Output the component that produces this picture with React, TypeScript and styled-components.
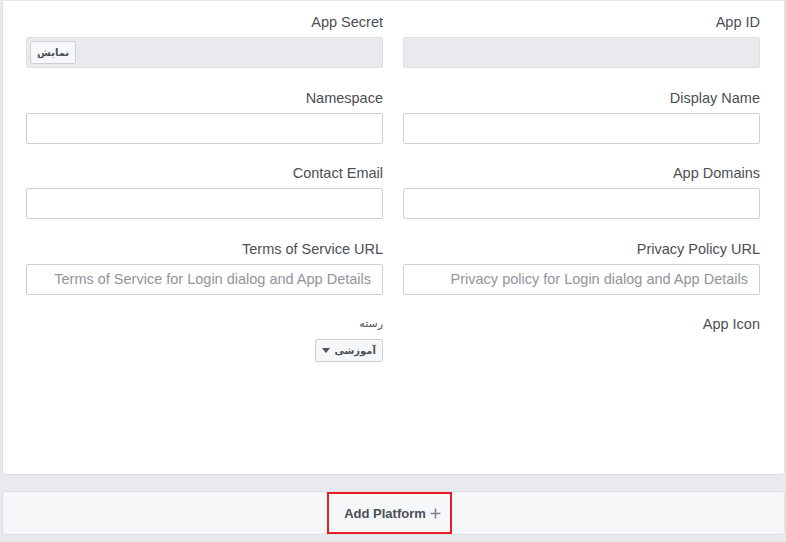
import React from 'react';
import styled, { createGlobalStyle } from 'styled-components';

const GlobalStyle = createGlobalStyle`
  html, body {
    margin: 0;
    padding: 0;
    background: #e9eaed;
  }
  body {
    font-family: "Liberation Sans", Arial, "Noto Sans", sans-serif;
    color: #4b4f56;
  }
`;

const Page = styled.div`
  width: 786px;
  height: 542px;
  overflow: hidden;
  padding: 0 1px 0 2px;
  box-sizing: border-box;
  display: flex;
  flex-direction: column;
  gap: 16px;
`;

const Card = styled.div`
  background: #fff;
  border: 1px solid #dddfe2;
  border-top-color: #e5e6e9;
  border-radius: 0 0 3px 3px;
  height: 475px;
  box-sizing: border-box;
  padding: 12px 24px 0 22px;
`;

const Grid = styled.div`
  direction: rtl;
  display: grid;
  grid-template-columns: 357px 357px;
  column-gap: 20px;
  row-gap: 20.5px;
`;

const Field = styled.div`
  display: flex;
  flex-direction: column;
  align-items: stretch;
`;

const Label = styled.div`
  font-size: 14.5px;
  line-height: 18px;
  color: #4b4f56;
  text-align: right;
  margin-bottom: 6px;
`;

const FaLabel = styled(Label)`
  font-family: "DejaVu Sans", "Noto Sans", sans-serif;
  font-size: 11px;
  color: #4b4f56;
`;

const Input = styled.input<{ $disabled?: boolean }>`
  direction: rtl;
  height: 31px;
  box-sizing: border-box;
  border: 1px solid ${(p) => (p.$disabled ? '#dddfe2' : '#ccd0d5')};
  border-radius: 2px;
  background: ${(p) => (p.$disabled ? '#e9eaed' : '#fff')};
  font-family: "Liberation Sans", Arial, sans-serif;
  font-size: 14.5px;
  padding: 0 11px;
  color: #1d2129;
  outline: none;
  &::placeholder {
    color: #90949c;
  }
`;

const SecretBox = styled.div`
  height: 31px;
  box-sizing: border-box;
  border: 1px solid #dddfe2;
  border-radius: 2px;
  background: #e9eaed;
  display: flex;
  align-items: center;
  justify-content: flex-end;
  padding: 0 3px;
`;

const SmallButton = styled.button`
  direction: rtl;
  height: 23px;
  box-sizing: border-box;
  padding: 0 6px;
  border: 1px solid #ced0d4;
  border-radius: 2px;
  background: #f6f7f9;
  color: #4b4f56;
  font-family: "DejaVu Sans", "Noto Sans", sans-serif;
  font-size: 10px;
  font-weight: bold;
  display: inline-flex;
  align-items: center;
  gap: 4px;
  cursor: pointer;
`;

const SelectRow = styled.div`
  display: flex;
  justify-content: flex-start;
`;

const Caret = styled.span`
  width: 0;
  height: 0;
  border-left: 4px solid transparent;
  border-right: 4px solid transparent;
  border-top: 5px solid #4b4f56;
`;

const PlatformBar = styled.div`
  height: 44px;
  box-sizing: border-box;
  border: 1px solid #dddfe2;
  border-radius: 3px;
  background: #f6f7f9;
  display: flex;
  justify-content: center;
`;

const Highlight = styled.div`
  margin-right: 8px;
  width: 125px;
  box-sizing: border-box;
  border: 2px solid #ed1c24;
  display: flex;
  align-items: center;
  justify-content: center;
  gap: 4px;
  font-size: 13px;
  font-weight: bold;
  color: #4b4f56;
  padding-left: 6px;
`;

const Plus = () => (
  <svg width="11" height="11" viewBox="0 0 11 11">
    <path d="M5.5 0.5v10M0.5 5.5h10" stroke="#7f8389" strokeWidth="1.6" />
  </svg>
);

export default function App() {
  return (
    <>
      <GlobalStyle />
      <Page>
        <Card>
          <Grid>
            <Field>
              <Label>App ID</Label>
              <Input $disabled readOnly />
            </Field>
            <Field>
              <Label>App Secret</Label>
              <SecretBox>
                <SmallButton>نمایش</SmallButton>
              </SecretBox>
            </Field>
            <Field>
              <Label>Display Name</Label>
              <Input />
            </Field>
            <Field>
              <Label>Namespace</Label>
              <Input />
            </Field>
            <Field>
              <Label>App Domains</Label>
              <Input />
            </Field>
            <Field>
              <Label>Contact Email</Label>
              <Input />
            </Field>
            <Field>
              <Label>Privacy Policy URL</Label>
              <Input placeholder="Privacy policy for Login dialog and App Details" />
            </Field>
            <Field>
              <Label>Terms of Service URL</Label>
              <Input placeholder="Terms of Service for Login dialog and App Details" />
            </Field>
            <Field>
              <Label>App Icon</Label>
            </Field>
            <Field>
              <FaLabel>رسته</FaLabel>
              <SelectRow>
                <SmallButton>
                  آموزشی
                  <Caret />
                </SmallButton>
              </SelectRow>
            </Field>
          </Grid>
        </Card>
        <PlatformBar>
          <Highlight>
            Add Platform <Plus />
          </Highlight>
        </PlatformBar>
      </Page>
    </>
  );
}
